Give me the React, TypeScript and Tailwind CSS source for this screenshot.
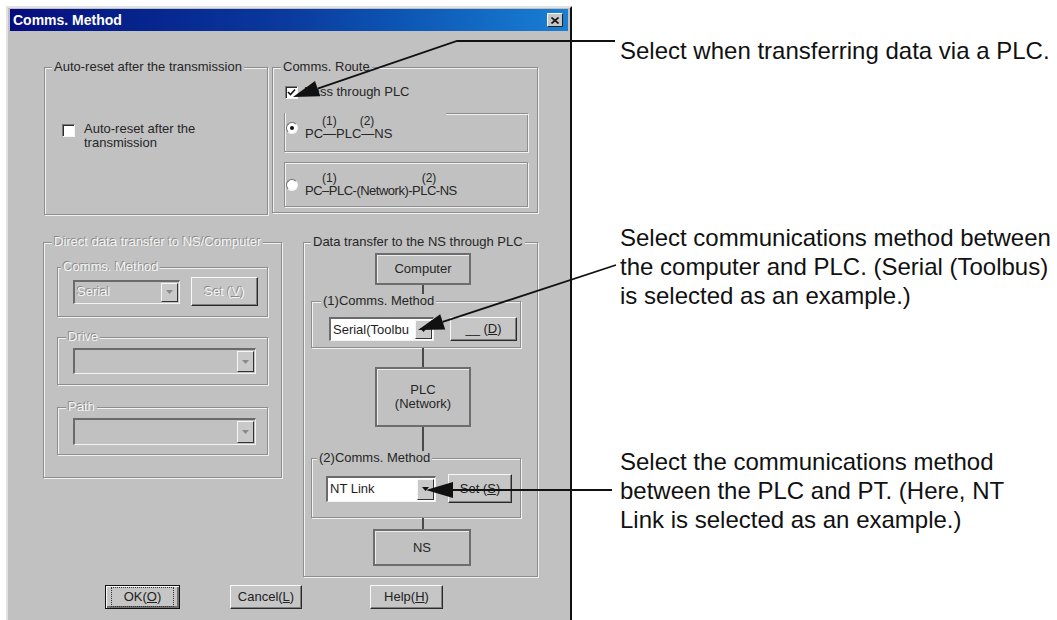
import React from "react";

const DIS = "text-[#f4f4f4] [text-shadow:-1px_-1px_0_#8a8a8a]";
const ETCH = "border border-[#8d8d8d] shadow-[1px_1px_0_#f2f2f2,inset_1px_1px_0_#f2f2f2]";
const T = "text-[13px] leading-[14px] text-[#262626]";

type P = { children?: React.ReactNode; className?: string; disabled?: boolean };

function Group({ label, className = "", legendClass = "", disabled = false, children }: P & { label: string; legendClass?: string }) {
  return (
    <fieldset className={`${ETCH} shrink-0 ${className}`}>
      <legend className={`px-[2px] bg-[#c1c1c1] text-[13px] leading-[14px] whitespace-nowrap ${disabled ? DIS : "text-[#262626]"} ${legendClass}`}>
        {label}
      </legend>
      {children}
    </fieldset>
  );
}

function Check({ checked = false }: { checked?: boolean }) {
  return (
    <div className="w-[13px] h-[13px] shrink-0 bg-white border border-t-[#7a7a7a] border-l-[#7a7a7a] border-r-[#f4f4f4] border-b-[#f4f4f4] shadow-[inset_1px_1px_0_#2c2c2c] flex items-center justify-center">
      {checked && (
        <svg width="9" height="9" viewBox="0 0 9 9">
          <path d="M1 4 L3.5 6.5 L8 1.5" stroke="#111" strokeWidth="1.6" fill="none" />
        </svg>
      )}
    </div>
  );
}

function Radio({ on = false }: { on?: boolean }) {
  return (
    <div className="w-[12px] h-[12px] shrink-0 rounded-full bg-white border border-t-[#6f6f6f] border-l-[#6f6f6f] border-r-[#f3f3f3] border-b-[#f3f3f3] flex items-center justify-center">
      {on && <div className="w-[4px] h-[4px] rounded-full bg-[#111]" />}
    </div>
  );
}

function Combo({ text = "", className = "", disabled = false }: { text?: string; className?: string; disabled?: boolean }) {
  return (
    <div
      className={`flex shrink-0 border-t-2 border-l-2 border-r border-b border-t-[#6a6a6a] border-l-[#6a6a6a] border-r-[#f3f3f3] border-b-[#f3f3f3] ${
        disabled ? "bg-[#c1c1c1]" : "bg-white"
      } ${className}`}
    >
      <div className={`flex-1 flex items-center pl-[2px] overflow-hidden whitespace-nowrap text-[13px] leading-[14px] ${disabled ? DIS : "text-[#1e1e1e]"}`}>
        {text}
      </div>
      <div className="w-[17px] m-[1px] flex items-center justify-center bg-[#c9c9c9] border border-t-[#f6f6f6] border-l-[#f6f6f6] border-r-[#333] border-b-[#333]">
        <svg width="7" height="4" viewBox="0 0 7 4">
          <path d="M0 0h7L3.5 4z" fill={disabled ? "#8a8a8a" : "#111"} />
        </svg>
      </div>
    </div>
  );
}

function Btn({ children, className = "", disabled = false, def = false }: P & { def?: boolean }) {
  return (
    <div
      className={`flex items-center justify-center shrink-0 bg-[#c6c6c6] border ${
        def ? "border-[#111]" : "border-t-[#f8f8f8] border-l-[#f8f8f8] border-r-[#2a2a2a] border-b-[#2a2a2a]"
      } shadow-[inset_-1px_-1px_0_#7f7f7f] text-[13px] leading-[14px] whitespace-nowrap ${disabled ? DIS : "text-[#222]"} ${className}`}
    >
      {children}
    </div>
  );
}

function Node({ children, className = "" }: P) {
  return (
    <div className={`flex flex-col items-center justify-center shrink-0 border-2 border-[#6d6d6d] shadow-[inset_1px_1px_0_#ececec] text-center ${T} ${className}`}>
      {children}
    </div>
  );
}

function Wire({ className = "" }: { className?: string }) {
  return <div className={`w-[2px] ml-[118px] bg-[#4a4a4a] shrink-0 ${className}`} />;
}

function Dialog() {
  return (
    <div className="w-[566px] h-[614px] ml-[6px] mt-[6px] shrink-0 bg-[#c1c1c1] border-l-2 border-t-2 border-l-[#e2e2e2] border-t-[#e2e2e2] border-r-2 border-r-[#111] px-[2px] pt-[1px] flex flex-col font-['Liberation_Sans',Arial,sans-serif]">
      {/* Title bar */}
      <div className="h-[22px] shrink-0 flex items-center bg-linear-to-r from-[#070a7e] via-[#0b3a9e] to-[#1a7fd4] pl-[3px]">
        <span className="text-white font-bold text-[14px] leading-[16px]">Comms. Method</span>
        <div className="ml-auto mr-[5px] w-[16px] h-[14px] bg-[#c6c6c6] border border-t-[#f8f8f8] border-l-[#f8f8f8] border-r-[#222] border-b-[#222] flex items-center justify-center">
          <svg width="8" height="7" viewBox="0 0 8 7">
            <path d="M0.5 0.5L7.5 6.5M7.5 0.5L0.5 6.5" stroke="#111" strokeWidth="1.6" />
          </svg>
        </div>
      </div>

      {/* Row 1 */}
      <div className="flex items-start mt-[29px]">
        <Group label="Auto-reset after the transmission" className="ml-[34px] w-[224px] h-[155px]" legendClass="ml-[7px]">
          <div className="flex items-start ml-[17px] mt-[48px]">
            <div className="mt-[2px]">
              <Check />
            </div>
            <div className={`ml-[9px] ${T}`}>
              Auto-reset after the
              <br />
              transmission
            </div>
          </div>
        </Group>

        <Group label="Comms. Route" className="ml-[4px] w-[266px] h-[153px]" legendClass="ml-[8px]">
          <div className="flex items-center ml-[12px] mt-[11px]">
            <Check checked />
            <span className={`ml-[6px] ${T}`}>Pass through PLC</span>
          </div>
          <div className="ml-[11px] mt-[14px] w-[244px] h-[39px] border-l border-r border-b border-[#8d8d8d] shadow-[1px_1px_0_#f2f2f2,inset_1px_0_0_#f2f2f2] flex flex-col">
            <div className="self-end w-[82px] h-[1px] bg-[#8d8d8d] shadow-[0_1px_0_#f2f2f2] -mr-[1px]" />
            <div className="flex items-center mt-[1px]">
              <div className="ml-[1px]">
                <Radio on />
              </div>
              <div className={`ml-[7px] flex flex-col ${T}`}>
                <div className="flex text-[12px] leading-[12px]">
                  <span className="ml-[17px]">(1)</span>
                  <span className="ml-[23px]">(2)</span>
                </div>
                <span>PC—PLC—NS</span>
              </div>
            </div>
          </div>
          <div className="ml-[11px] mt-[10px] w-[244px] h-[45px] border border-[#8d8d8d] shadow-[1px_1px_0_#f2f2f2,inset_1px_1px_0_#f2f2f2] flex items-center">
            <div className="ml-[1px]">
              <Radio />
            </div>
            <div className={`ml-[7px] flex flex-col ${T}`}>
              <div className="flex text-[12px] leading-[12px]">
                <span className="ml-[17px]">(1)</span>
                <span className="ml-[85px]">(2)</span>
              </div>
              <span className="tracking-[-0.5px]">PC–PLC-(Network)-PLC-NS</span>
            </div>
          </div>
        </Group>
      </div>

      {/* Row 2 */}
      <div className="flex items-start mt-[20px]">
        <Group label="Direct data transfer to NS/Computer" disabled className="ml-[33px] w-[239px] h-[243px]" legendClass="ml-[8px]">
          <Group label="Comms. Method" disabled className="ml-[13px] mt-[11px] w-[211px] h-[57px]" legendClass="ml-[3px]">
            <div className="flex items-center ml-[15px] mt-[3px] h-[29px]">
              <Combo text="Serial" disabled className="w-[107px] h-[24px]" />
              <Btn disabled className="ml-[11px] w-[67px] h-[29px]">
                Set (<u>V</u>)
              </Btn>
            </div>
          </Group>
          <Group label="Drive" disabled className="ml-[13px] mt-[13px] w-[211px] h-[55px]" legendClass="ml-[8px]">
            <Combo disabled className="ml-[15px] mt-[4px] w-[183px] h-[26px]" />
          </Group>
          <Group label="Path" disabled className="ml-[13px] mt-[15px] w-[211px] h-[55px]" legendClass="ml-[8px]">
            <Combo disabled className="ml-[15px] mt-[4px] w-[183px] h-[27px]" />
          </Group>
        </Group>

        <Group label="Data transfer to the NS through PLC" className="ml-[21px] w-[235px] h-[342px]" legendClass="ml-[7px]">
          <div className="flex flex-col items-start">
            <Node className="ml-[71px] mt-[4px] w-[96px] h-[32px]">Computer</Node>
            <Wire className="h-[9px]" />
            <Group label="(1)Comms. Method" className="ml-[7px] w-[210px] h-[54px]" legendClass="ml-[9px]">
              <div className="flex items-center ml-[17px] mt-[9px]">
                <Combo text="Serial(Toolbu" className="w-[105px] h-[24px]" />
                <Btn className="ml-[16px] w-[67px] h-[24px]">
                  __ (<u>D</u>)
                </Btn>
              </div>
            </Group>
            <Wire className="h-[19px]" />
            <Node className="ml-[71px] w-[96px] h-[60px]">
              <span>PLC</span>
              <span>(Network)</span>
            </Node>
            <Wire className="h-[24px]" />
            <Group label="(2)Comms. Method" className="ml-[7px] w-[210px] h-[67px]" legendClass="ml-[5px]">
              <div className="flex items-center ml-[14px] mt-[9px] h-[29px]">
                <Combo text="NT Link" className="w-[110px] h-[26px]" />
                <Btn className="ml-[12px] w-[64px] h-[29px]">
                  Set (<u>S</u>)
                </Btn>
              </div>
            </Group>
            <Wire className="h-[11px]" />
            <Node className="ml-[69px] w-[98px] h-[37px]">NS</Node>
          </div>
        </Group>
      </div>

      {/* Buttons */}
      <div className="flex items-center mt-[8px]">
        <Btn def className="ml-[95px] w-[75px] h-[24px] shadow-[inset_1px_1px_0_#f8f8f8,inset_-2px_-2px_0_#6f6f6f]">
          <span className="border border-dotted border-[#333] px-[12px] py-[2px]">
            OK(<u>O</u>)
          </span>
        </Btn>
        <Btn className="ml-[50px] w-[72px] h-[24px]">
          Cancel(<u>L</u>)
        </Btn>
        <Btn className="ml-[68px] w-[73px] h-[24px]">
          Help(<u>H</u>)
        </Btn>
      </div>
    </div>
  );
}

export default function App() {
  return (
    <div className="relative w-[1057px] h-[620px] bg-white overflow-hidden flex items-start">
      <Dialog />
      <div className="ml-[48px] flex flex-col font-['Liberation_Sans',Arial,sans-serif] text-[24px] leading-[29px] text-[#111] whitespace-nowrap">
        <div className="mt-[36px]">Select when transferring data via a PLC.</div>
        <div className="mt-[158px]">
          Select communications method between
          <br />
          the computer and PLC. (Serial (Toolbus)
          <br />
          is selected as an example.)
        </div>
        <div className="mt-[137px]">
          Select the communications method
          <br />
          between the PLC and PT. (Here, NT
          <br />
          Link is selected as an example.)
        </div>
      </div>

      <svg className="absolute left-0 top-0 pointer-events-none" width="1057" height="620" viewBox="0 0 1057 620">
        <g stroke="#111" strokeWidth="1.8" fill="none">
          <path d="M615 41H457L317.6 88.6" />
          <path d="M616 265L442.7 321.9" />
          <path d="M612 490H452" />
        </g>
        <g fill="#111">
          <polygon points="293,97 320.2,96.2 315,81" />
          <polygon points="418,330 445.2,329.5 440.2,314.3" />
          <polygon points="426,490 453,498 453,482" />
        </g>
      </svg>
    </div>
  );
}
